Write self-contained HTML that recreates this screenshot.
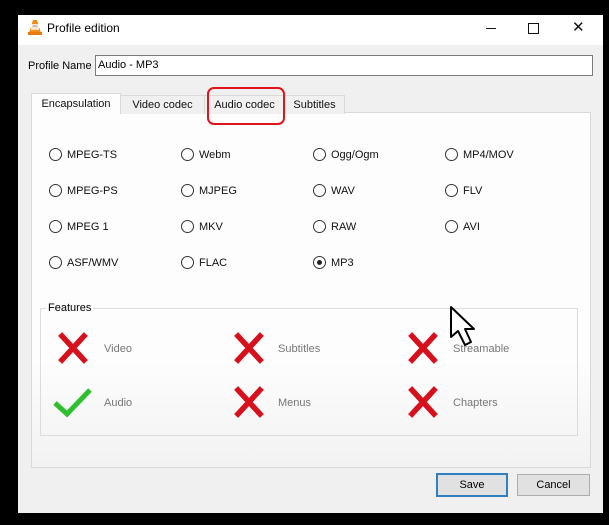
<!DOCTYPE html>
<html><head><style>
body{margin:0;width:609px;height:525px;background:#000;position:relative;overflow:hidden;font-family:"Liberation Sans",sans-serif;font-size:11px;color:#000}
.a{position:absolute}
.win{left:18px;top:15px;width:585px;height:498px;background:#f0f0f0}
.title{left:18px;top:15px;width:585px;height:30px;background:#fff}
.rad{position:absolute;width:11px;height:11px;border:1px solid #333;border-radius:50%;background:#fff}
.lbl{position:absolute;font-size:11px;color:#111;margin-top:1px}
.ft{position:absolute;font-size:11px;color:#777}
.tab{position:absolute;top:95px;height:18px;border:1px solid #d9d9d9;border-bottom:none;background:#f0f0f0;text-align:center;line-height:19px;color:#111}
.btn{position:absolute;top:474px;height:20px;border:1px solid #adadad;background:#e1e1e1;text-align:center;line-height:20px}
</style></head><body>
<div class="a win"></div>
<div class="a title"></div>
<svg class="a" style="left:28px;top:19px" width="14" height="16" viewBox="0 0 14 16"><path d="M5 1h4l4 13H1z" fill="#f08c1a"/><path d="M4 6h6l0.6 2H3.4zM3 10h8" stroke="#fff" stroke-width="1.5"/><rect x="0" y="13" width="14" height="3" fill="#e57a10"/></svg>
<div class="a" style="left:47px;top:21px;font-size:12px">Profile edition</div>
<div class="a" style="left:486px;top:28px;width:10px;border-top:1px solid #111"></div>
<div class="a" style="left:528px;top:23px;width:9px;height:9px;border:1px solid #111"></div>
<div class="a" style="left:572px;top:18px;font-size:15px;color:#111">✕</div>
<div class="a" style="left:28px;top:60px">Profile Name</div>
<div class="a" style="left:95px;top:55px;width:494px;height:19px;border:1px solid #7a7a7a;background:#fff;line-height:19px;padding-left:2px">Audio - MP3</div>
<div class="a" style="left:31px;top:112px;width:558px;height:354px;border:1px solid #d9d9d9;background:linear-gradient(#fdfdfd 70%,#f2f2f2)"></div>
<div class="tab" style="left:31px;top:93px;height:20px;width:88px;background:#fdfdfd;border-color:#d9d9d9;line-height:20px">Encapsulation</div>
<div class="tab" style="left:120px;width:83px">Video codec</div>
<div class="tab" style="left:204px;width:79px">Audio codec</div>
<div class="tab" style="left:284px;width:59px">Subtitles</div>
<div class="a" style="left:207px;top:87px;width:74px;height:34px;border:2.5px solid #e0141b;border-radius:7px"></div>

<div class="rad" style="left:49px;top:148px"></div><div class="lbl" style="left:67px;top:148px">MPEG-TS</div>
<div class="rad" style="left:181px;top:148px"></div><div class="lbl" style="left:199px;top:148px">Webm</div>
<div class="rad" style="left:313px;top:148px"></div><div class="lbl" style="left:331px;top:148px">Ogg/Ogm</div>
<div class="rad" style="left:445px;top:148px"></div><div class="lbl" style="left:463px;top:148px">MP4/MOV</div>
<div class="rad" style="left:49px;top:184px"></div><div class="lbl" style="left:67px;top:184px">MPEG-PS</div>
<div class="rad" style="left:181px;top:184px"></div><div class="lbl" style="left:199px;top:184px">MJPEG</div>
<div class="rad" style="left:313px;top:184px"></div><div class="lbl" style="left:331px;top:184px">WAV</div>
<div class="rad" style="left:445px;top:184px"></div><div class="lbl" style="left:463px;top:184px">FLV</div>
<div class="rad" style="left:49px;top:220px"></div><div class="lbl" style="left:67px;top:220px">MPEG 1</div>
<div class="rad" style="left:181px;top:220px"></div><div class="lbl" style="left:199px;top:220px">MKV</div>
<div class="rad" style="left:313px;top:220px"></div><div class="lbl" style="left:331px;top:220px">RAW</div>
<div class="rad" style="left:445px;top:220px"></div><div class="lbl" style="left:463px;top:220px">AVI</div>
<div class="rad" style="left:49px;top:256px"></div><div class="lbl" style="left:67px;top:256px">ASF/WMV</div>
<div class="rad" style="left:181px;top:256px"></div><div class="lbl" style="left:199px;top:256px">FLAC</div>
<div class="rad" style="left:313px;top:256px"></div><div class="a" style="left:317px;top:260px;width:5px;height:5px;border-radius:50%;background:#222"></div><div class="lbl" style="left:331px;top:256px">MP3</div>

<div class="a" style="left:40px;top:308px;width:536px;height:126px;border:1px solid #dcdcdc"></div>
<div class="a" style="left:46px;top:302px;background:#fcfcfc;padding:0 2px">Features</div>

<svg class="a" style="left:0;top:0" width="609" height="525">
<g stroke="#d8101c" stroke-width="5.5" stroke-linecap="square">
<path d="M62 336L84 360M84 336L62 360"/>
<path d="M238 336L260 360M260 336L238 360"/>
<path d="M412 336L434 360M434 336L412 360"/>
<path d="M238 390L260 414M260 390L238 414"/>
<path d="M412 390L434 414M434 390L412 414"/>
</g>
<path d="M55 403L67 414L90 390" stroke="#2fbf2f" stroke-width="5" fill="none"/>
<path d="M451 307L451 337L458 331L465 345L471 342L465 329L474 329Z" fill="#fff" stroke="#000" stroke-width="2" stroke-linejoin="round"/>
</svg>
<div class="ft" style="left:104px;top:343px">Video</div>
<div class="ft" style="left:278px;top:343px">Subtitles</div>
<div class="ft" style="left:453px;top:343px">Streamable</div>
<div class="ft" style="left:104px;top:397px">Audio</div>
<div class="ft" style="left:278px;top:397px">Menus</div>
<div class="ft" style="left:453px;top:397px">Chapters</div>

<div class="btn" style="left:436px;width:68px;border:2px solid #2f7fc1;top:473px">Save</div>
<div class="btn" style="left:517px;width:71px">Cancel</div>
</body></html>
